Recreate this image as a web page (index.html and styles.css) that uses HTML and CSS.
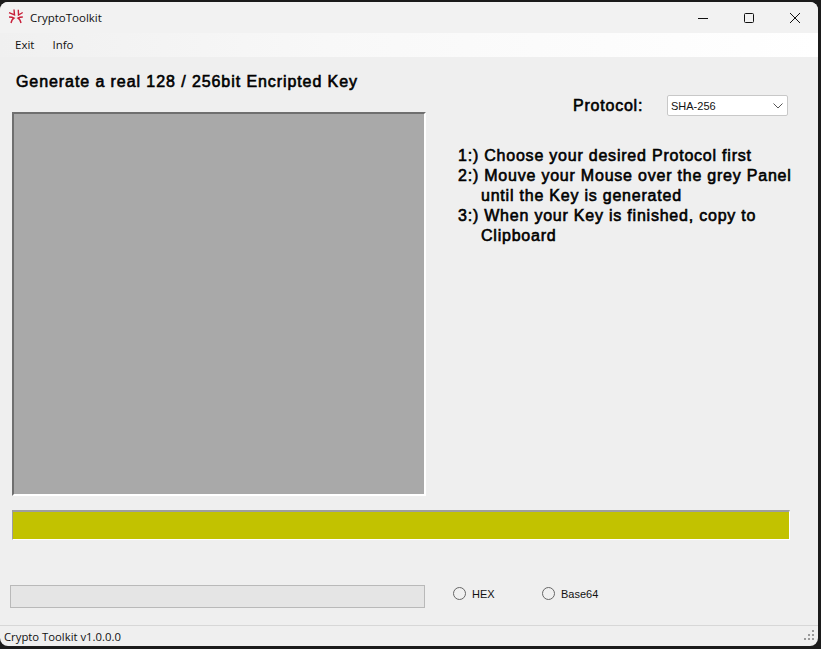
FILE: index.html
```html
<!DOCTYPE html>
<html lang="en">
	<head>
		<meta charset="UTF-8" />
		<meta name="viewport" content="width=device-width, initial-scale=1.0" />
		<title>CryptoToolkit</title>
		<link rel="stylesheet" href="styles.css">
	</head>
	<body>
		<div class="window">
			<div class="titlebar">
				<svg class="app-icon" width="16" height="16" viewBox="0 0 16 16" fill="none" stroke="#c8203a" stroke-width="1.4">
					<path d="M1 3.7 L6.5 6 L6 0.5" />
					<path d="M10.3 0.8 L10.5 6 L14.7 3.5" />
					<path d="M1 8 Q4.5 8 6 9 Q4 10 3 14" />
					<path d="M14.8 8 Q11.5 8 10 9 Q12 10 13 14" />
				</svg>
				<span class="app-title">CryptoToolkit</span>
				<div class="window-buttons">
					<svg width="12" height="12" viewBox="0 0 12 12" fill="none" stroke="#111" stroke-width="1"><path d="M1 6.5 H11" /></svg>
					<svg width="12" height="12" viewBox="0 0 12 12" fill="none" stroke="#111" stroke-width="1"><rect x="1.5" y="1.5" width="9" height="9" rx="1" /></svg>
					<svg width="12" height="12" viewBox="0 0 12 12" fill="none" stroke="#111" stroke-width="1"><path d="M1 1 L11 11 M11 1 L1 11" /></svg>
				</div>
			</div>

			<div class="menubar">
				<span class="menu-item">Exit</span>
				<span class="menu-item">Info</span>
			</div>

			<div class="content">
				<div class="top-area">
					<div class="left-col">
						<h1 class="heading">Generate a real 128 / 256bit Encripted Key</h1>
						<div class="mouse-panel"></div>
					</div>
					<div class="right-col">
						<div class="protocol-row">
							<span class="protocol-label">Protocol:</span>
							<div class="select">
								<span>SHA-256</span>
								<svg width="10" height="6" viewBox="0 0 10 6" fill="none" stroke="#555" stroke-width="1"><path d="M0.5 0.5 L5 5 L9.5 0.5" /></svg>
							</div>
						</div>
						<ol class="steps">
							<li><span class="step-num">1:)</span> Choose your desired Protocol first</li>
							<li><span class="step-num">2:)</span> Mouve your Mouse over the grey Panel<br><span class="step-indent">until the Key is generated</span></li>
							<li><span class="step-num">3:)</span> When your Key is finished, copy to<br><span class="step-indent">Clipboard</span></li>
						</ol>
					</div>
				</div>

				<div class="key-bar"></div>

				<div class="output-row">
					<div class="output-box"></div>
					<label class="radio radio-hex"><span class="radio-dot"></span>HEX</label>
					<label class="radio"><span class="radio-dot"></span>Base64</label>
				</div>
			</div>

			<div class="statusbar">
				<span>Crypto Toolkit v1.0.0.0</span>
				<svg class="grip" width="12" height="12" viewBox="0 0 12 12" fill="#9a9a9a">
					<rect x="8" y="0" width="2" height="2" />
					<rect x="4" y="4" width="2" height="2" />
					<rect x="8" y="4" width="2" height="2" />
					<rect x="0" y="8" width="2" height="2" />
					<rect x="4" y="8" width="2" height="2" />
					<rect x="8" y="8" width="2" height="2" />
				</svg>
			</div>
		</div>
	</body>
</html>
```

FILE: styles.css
```css
html,
body {
	margin: 0;
	height: 100%;
	overflow: hidden;
	background-color: #1b1b1b;
}
.window {
	box-sizing: border-box;
	width: 818px;
	height: 644px;
	margin-top: 2px;
	background-color: #efefef;
	border-radius: 8px;
	display: flex;
	flex-direction: column;
	overflow: hidden;
	font-family: 'Open Sans', 'Noto Sans', sans-serif;
	color: #111;
}
.titlebar {
	height: 31px;
	flex: none;
	display: flex;
	align-items: center;
	padding-left: 8px;
	background-color: #f2f2f2;
}
.app-icon {
	margin: 0 6px 1px 0;
}
.app-title {
	font-size: 11.5px;
}
.window-buttons {
	margin-left: auto;
	display: flex;
	gap: 34px;
	padding-right: 17px;
}
.menubar {
	height: 24px;
	flex: none;
	display: flex;
	align-items: center;
	gap: 18px;
	padding: 0 0 2px 15px;
	box-sizing: border-box;
	background: linear-gradient(to right, #f0f0f0, #f8f8f8 40%, #ffffff);
	font-size: 11.5px;
}
.content {
	flex: 1;
	display: flex;
	flex-direction: column;
	padding-left: 10px;
}
.top-area {
	display: flex;
}
.left-col {
	width: 414px;
	padding-left: 2px;
}
.heading,
.right-col {
	font-family: 'Liberation Sans', Arial, sans-serif;
	font-size: 16px;
	font-weight: normal;
	-webkit-text-stroke: 0.6px #000;
	color: #000;
}
.heading {
	margin: 14px 0 0 4px;
	height: 41px;
	line-height: 21px;
	letter-spacing: 0.92px;
	white-space: nowrap;
}
.mouse-panel {
	box-sizing: border-box;
	width: 414px;
	height: 384px;
	background-color: #a9a9a9;
	border: 2px solid;
	border-color: #6f6f6f #fff #fff #6f6f6f;
}
.right-col {
	flex: 1;
	letter-spacing: 0.78px;
}
.protocol-row {
	display: flex;
	align-items: center;
	margin-top: 38px;
	padding-left: 147px;
}
.protocol-label {
	width: 94px;
}
.select {
	box-sizing: border-box;
	width: 121px;
	height: 21px;
	display: flex;
	align-items: center;
	justify-content: space-between;
	padding: 0 4px 0 3px;
	background-color: #fff;
	border: 1px solid #c8c8c8;
	border-radius: 2px;
	font-size: 11px;
	letter-spacing: 0;
	-webkit-text-stroke: 0;
	color: #111;
}
.steps {
	list-style: none;
	margin: 30px 0 0 32px;
	padding: 0;
	line-height: 20px;
	white-space: nowrap;
}
.step-indent {
	padding-left: 23px;
}
.key-bar {
	box-sizing: border-box;
	width: 778px;
	height: 30px;
	margin: 14px 0 0 2px;
	background-color: #c2c200;
	border: 1px solid;
	border-top: 2px solid;
	border-color: #9e9e9e #fff #fff #9e9e9e;
}
.output-row {
	display: flex;
	align-items: center;
	margin-top: 45px;
	font-family: 'Liberation Sans', Arial, sans-serif;
	font-size: 11px;
}
.output-box {
	box-sizing: border-box;
	width: 415px;
	height: 23px;
	background-color: #e5e5e5;
	border: 1px solid #b9b9b9;
}
.radio {
	display: flex;
	align-items: center;
	gap: 6px;
	width: 89px;
	margin-bottom: 6px;
}
.radio-hex {
	margin-left: 28px;
}
.radio-dot {
	box-sizing: border-box;
	width: 13px;
	height: 13px;
	border: 1px solid #666;
	border-radius: 50%;
	background-color: #f0f0f0;
}
.statusbar {
	height: 20px;
	flex: none;
	display: flex;
	align-items: center;
	justify-content: space-between;
	padding: 0 2px 0 4px;
	border-top: 1px solid #d7d7d7;
	font-size: 11.3px;
}
```
